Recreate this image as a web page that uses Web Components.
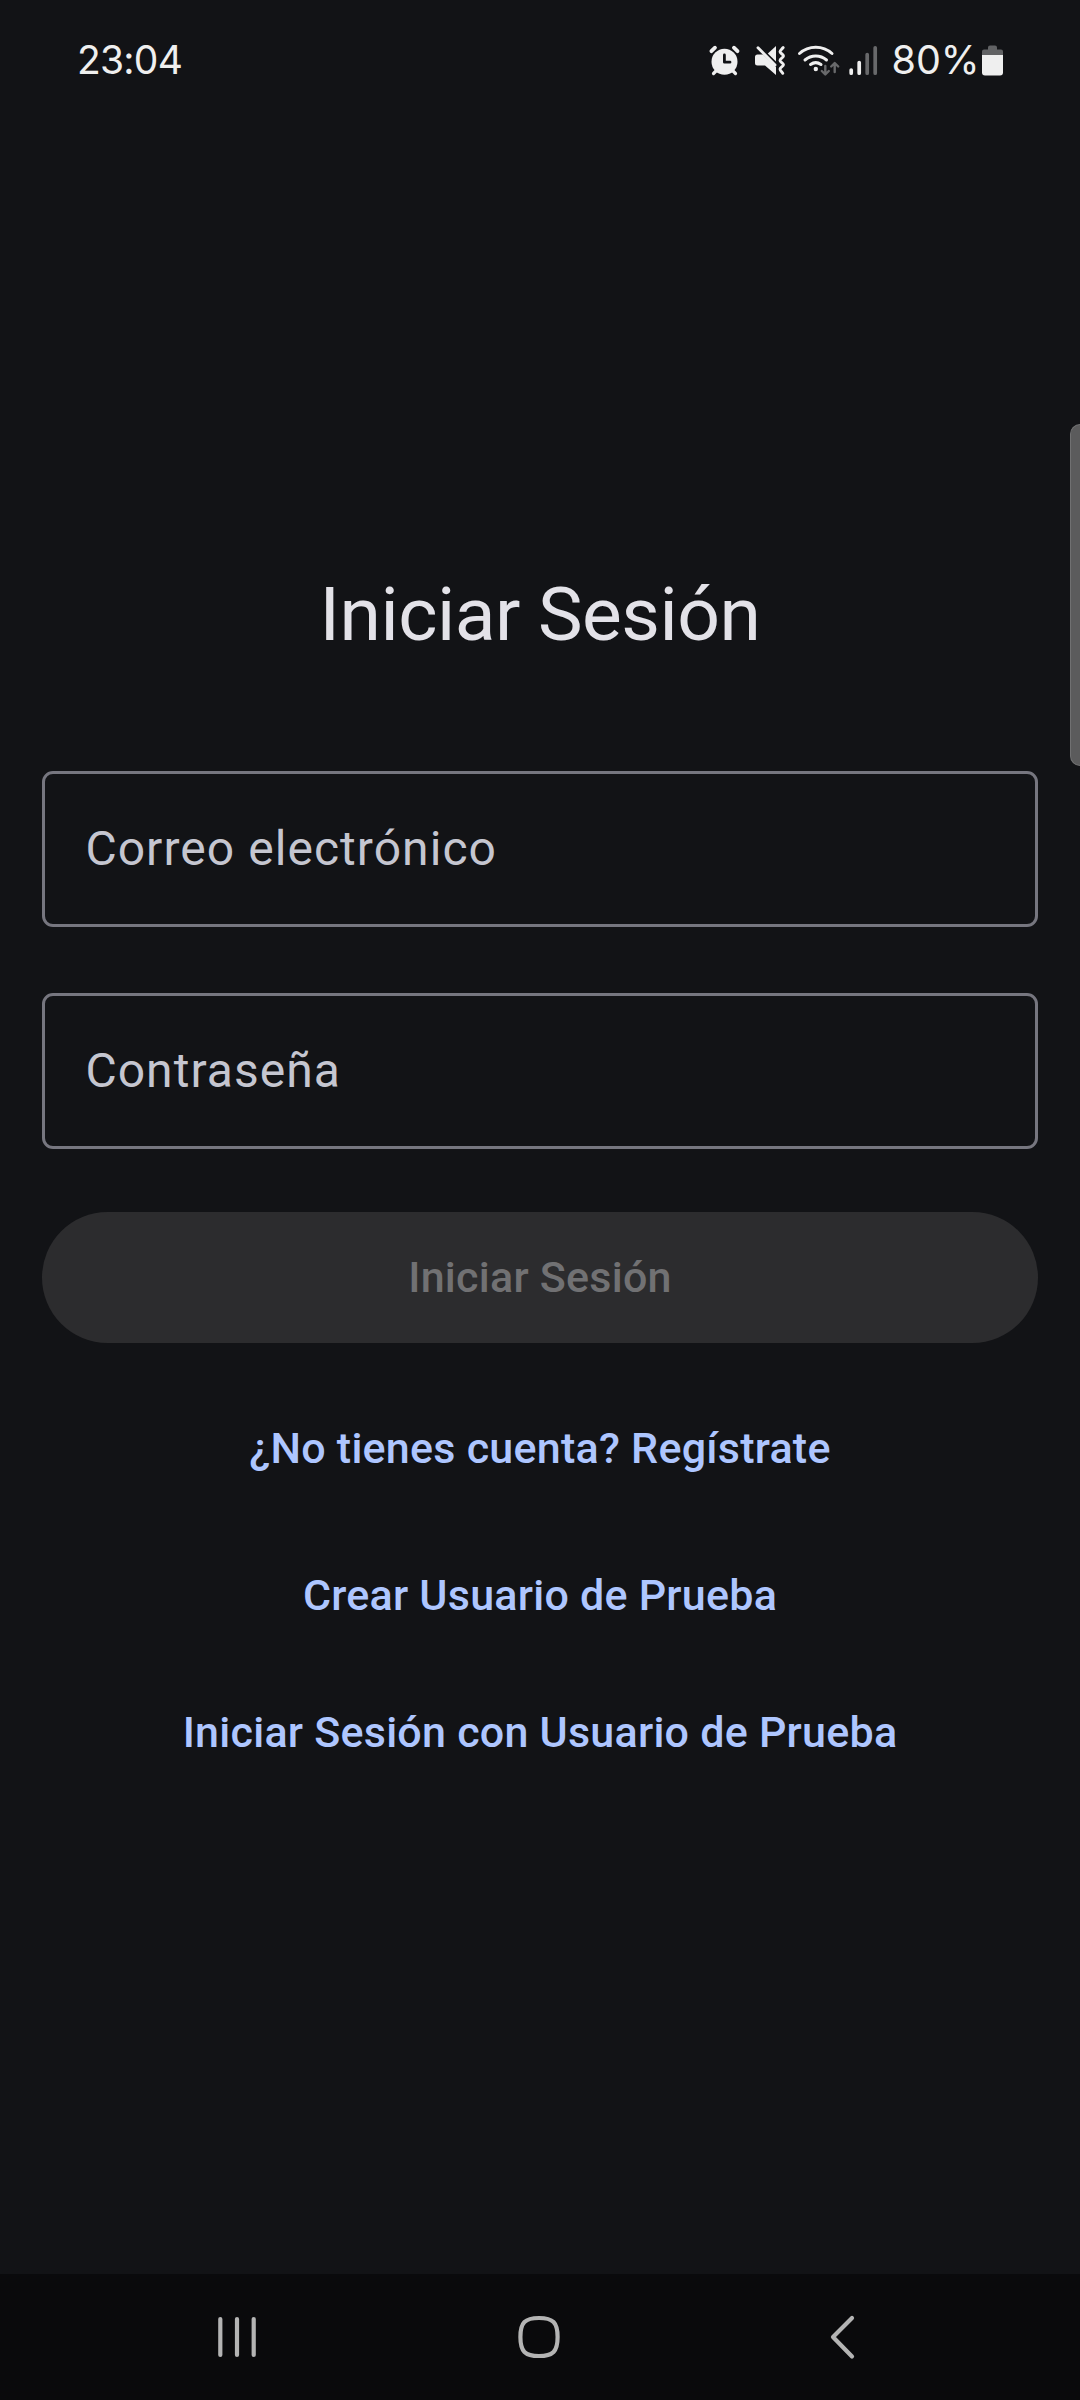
<!DOCTYPE html>
<html lang="es">
<head>
<meta charset="utf-8">
<title>Iniciar Sesión</title>
<style>
html,body{margin:0;background:#121316}
body{width:1080px;height:2400px;overflow:hidden;font-family:Roboto,sans-serif}
</style>
</head>
<body>
<login-app></login-app>
<script>
const define=(name,html)=>{
  const t=document.createElement('template');
  t.innerHTML=html;
  customElements.define(name,class extends HTMLElement{
    constructor(){super();this.attachShadow({mode:'open'}).append(t.content.cloneNode(true));}
  });
};

define('status-bar',`<style>
:host{display:flex;justify-content:space-between;align-items:center;height:120px;box-sizing:border-box;padding:0 76px 0 77px;font:400 39px/48px Inter,sans-serif;color:#efefef}
.time{letter-spacing:-.75px}
.right{display:flex;align-items:center}
.pct{display:block;width:98px;box-sizing:border-box;padding-left:7.5px;font-size:39.5px}
svg{display:block}
</style>
<span class="time">23:04</span>
<div class="right">
<svg width="184" height="40" viewBox="700 40 184 40" fill="none" stroke="#efefef" stroke-linecap="round" stroke-linejoin="round">
  <circle cx="724.5" cy="61.8" r="13" fill="#efefef" stroke="none"/>
  <path d="M711.4 51.2l3.6-3.5M737.5 51.2l-3.6-3.5" stroke-width="3.8"/>
  <path d="M713.5 73.5l4-4M735.5 73.5l-4-4" stroke-width="3.2"/>
  <path d="M724.4 55v7.2h5.6" stroke="#121316" stroke-width="2.8"/>
  <path d="M755 57q0-2.500 2.500-2.500H763L776 67V75L765 65.500h-7.500q-2.500 0-2.500-2.500z" fill="#efefef" stroke="none"/>
  <path d="M776 46v15.500l-8.200-8z" fill="#efefef" stroke="none"/>
  <path d="M758 47.700L775 65" stroke-width="2.900"/>
  <path d="M783.2 47.500c-1.500 1.800-3.200 3-3.200 4.300s3.500 2.700 3.500 4.200-3.500 2.900-3.500 4.400 3.500 2.900 3.500 4.400-3.500 2.800-3.500 4.200 1.500 2.500 2.800 4.300" stroke-width="2.9"/>
  <path d="M799.5 53.5a24 24 0 0 1 32.500 0M805 60a16.500 16.500 0 0 1 21.500 0M810.500 64.500a9 9 0 0 1 10.500 0" stroke-width="3"/>
  <circle cx="815.8" cy="69" r="2.2" fill="#efefef" stroke="none"/>
  <path d="M825.3 66v8M821.8 71l3.500 3.500 3.500-3.500M834.700 72v-8.500M831.200 66.500l3.500-3.500 3.500 3.500" stroke="#68696b" stroke-width="2.4"/>
  <path d="M851.2 70v3.200M859.200 62.600v10.600" stroke-width="3.7"/>
  <path d="M867.2 54.600v18.600M875.200 47.800v25.400" stroke="#68696b" stroke-width="3.7"/>
</svg>
<span class="pct">80%</span>
<svg width="22" height="40" viewBox="982 40 22 40">
  <path d="M988 49.500v-2q0-2 2-2h5q2 0 2 2v2h4q2 0 2 2V55h-21v-3.500q0-2 2-2z" fill="#616264"/>
  <path d="M982 55h21v17.500q0 3-3 3h-15q-3 0-3-3z" fill="#efefef"/>
</svg>
</div>`);

define('text-field',`<style>
:host{display:flex;align-items:center;box-sizing:border-box;height:156px;border:3px solid #76767f;border-radius:11px;padding:0 39px 1px 40.4px;font-size:48px;line-height:60px;letter-spacing:1.05px;color:#c5c6d0}
</style><span><slot></slot></span>`);

define('filled-button',`<style>
:host{display:flex;align-items:center;justify-content:center;box-sizing:border-box;height:131px;padding-bottom:1px;border-radius:66px;background:#2c2c2e;color:#717173;font-weight:500;font-size:43px;line-height:60px;letter-spacing:.25px}
</style><span><slot></slot></span>`);

define('text-button',`<style>
:host{display:flex;align-items:center;justify-content:center;color:#aec6ff;font-weight:500;font-size:43px;line-height:60px;letter-spacing:.25px}
</style><span><slot></slot></span>`);

define('nav-bar',`<style>
:host{display:flex;align-items:center;height:126px;box-sizing:border-box;background:#0a0a0c;padding-left:216px}
svg{display:block}
svg+svg{margin-left:260px}
svg.back{margin-left:268px}
</style>
<svg width="42" height="46" viewBox="216 2314 42 46" fill="none" stroke="#b4b4b4" stroke-width="4.2" stroke-linecap="round"><path d="M220.3 2319v36M237 2319v36M253.7 2319v36"/></svg>
<svg width="42" height="46" viewBox="518 2314 42 46" fill="none" stroke="#b4b4b4" stroke-width="4.2"><path d="M539 2318c14 0 18.6 4.500 18.600 19s-4.600 19-18.600 19s-18.600-4.500-18.600-19s4.600-19 18.600-19z"/></svg>
<svg class="back" width="30" height="46" viewBox="828 2314 30 46" fill="none" stroke="#b4b4b4" stroke-width="4.2" stroke-linecap="round" stroke-linejoin="round"><path d="M852 2318l-19 19 19 19.500"/></svg>`);

define('edge-handle',`<style>
:host{display:block;position:absolute;right:0;top:424px;width:10px;height:342px;box-sizing:border-box;background:#5b5b5c;border:1px solid #707071;border-right:0;border-radius:10px 0 0 10px}
</style>`);

define('login-app',`<style>
:host{display:flex;flex-direction:column;position:relative;width:1080px;height:2400px}
main{flex:1;display:flex;flex-direction:column;padding:446px 42px 0}
h1{margin:0;text-align:center;font-weight:400;font-size:75px;line-height:96px;color:#e3e2e8;letter-spacing:-.5px}
.email{margin-top:109px}
.pass{margin-top:66px}
.submit{margin-top:63px}
.l1{margin-top:75px}
.l2{margin-top:87px}
.l3{margin-top:77px}
</style>
<status-bar></status-bar>
<main>
<h1>Iniciar Sesión</h1>
<text-field class="email">Correo electrónico</text-field>
<text-field class="pass">Contraseña</text-field>
<filled-button class="submit">Iniciar Sesión</filled-button>
<text-button class="l1">¿No tienes cuenta? Regístrate</text-button>
<text-button class="l2">Crear Usuario de Prueba</text-button>
<text-button class="l3">Iniciar Sesión con Usuario de Prueba</text-button>
</main>
<nav-bar></nav-bar>
<edge-handle></edge-handle>`);
</script>
</body>
</html>
